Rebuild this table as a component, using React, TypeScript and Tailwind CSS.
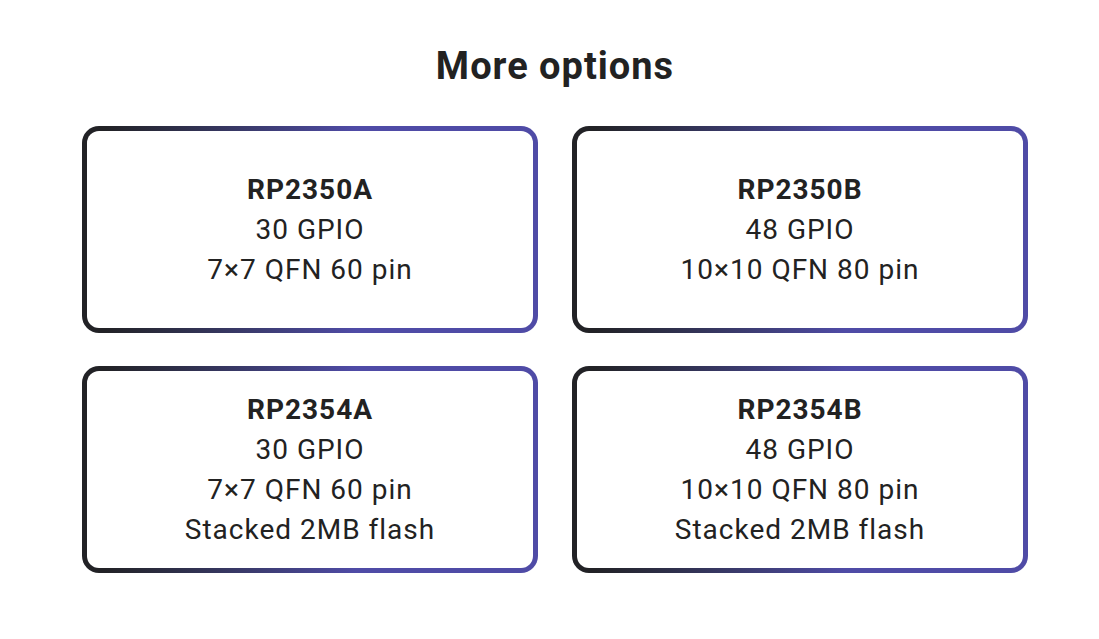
import React from "react";

const cards = [
  { title: "RP2350A", lines: ["30 GPIO", "7×7 QFN 60 pin"] },
  { title: "RP2350B", lines: ["48 GPIO", "10×10 QFN 80 pin"] },
  { title: "RP2354A", lines: ["30 GPIO", "7×7 QFN 60 pin", "Stacked 2MB flash"] },
  { title: "RP2354B", lines: ["48 GPIO", "10×10 QFN 80 pin", "Stacked 2MB flash"] },
];

export default function App() {
  return (
    <div
      className="w-[1099px] h-[639px] bg-white text-[#222222] pl-[82px] pr-[71px] pt-[43px]"
      style={{ fontFamily: "Roboto, 'Noto Sans', sans-serif" }}
    >
      <h2 className="text-center text-[38px] leading-[46px] font-bold tracking-[1px]">More options</h2>
      <div className="grid grid-cols-2 gap-x-[34px] gap-y-[33px] mt-[37px]">
        {cards.map((c) => (
          <div
            key={c.title}
            className="h-[207px] rounded-[17px] p-[5px] bg-gradient-to-r from-[#222226] from-5% to-[#4f4ba6] to-60%"
          >
            <div className="h-full w-full rounded-[12px] bg-white flex flex-col items-center justify-center text-[28px] leading-[40px] tracking-[1px]">
              <div className="font-bold">{c.title}</div>
              {c.lines.map((l) => (
                <div key={l}>{l}</div>
              ))}
            </div>
          </div>
        ))}
      </div>
    </div>
  );
}
